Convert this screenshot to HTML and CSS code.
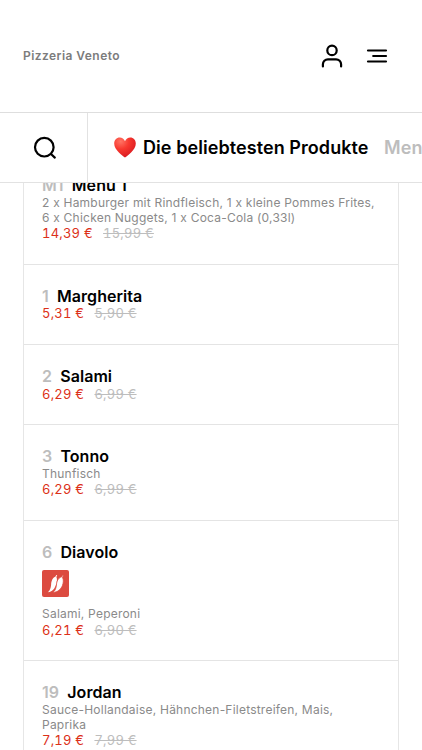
FILE: index.html
```html
<!DOCTYPE html>
<html lang="de">
<head>
<meta charset="utf-8">
<meta name="viewport" content="width=device-width, initial-scale=1">
<title>Pizzeria Veneto</title>
<link rel="stylesheet" href="styles.css">
</head>
<body>
<div class="screen">
  <header class="header">
    <h1 class="brand">Pizzeria Veneto</h1>
    <div class="actions">
      <svg class="icon" width="24" height="26" viewBox="0 0 24 26" aria-label="Konto"><circle cx="12" cy="7.4" r="4.7"/><path d="M2.9 23.4v-2.1a5 5 0 0 1 5-5h8.200a5 5 0 0 1 5 5v2.100"/></svg>
      <svg class="icon" width="22" height="20" viewBox="0 0 22 20" aria-label="Menü"><path d="M2 4.500h18M7.200 10h12.800M2 15.500h18"/></svg>
    </div>
  </header>
  <nav class="tabs">
    <button class="search" aria-label="Suche"><svg class="icon" width="24" height="24" viewBox="0 0 24 24"><circle cx="11.300" cy="11.200" r="9.300"/><path d="M18 18l3.800 3.600"/></svg></button>
    <div class="categories">
      <svg class="heart" width="22" height="21" viewBox="0 0 22 21">
        <defs><radialGradient id="g" cx=".3" cy=".2" r=".85"><stop offset="0" stop-color="#ff7464"/><stop offset=".45" stop-color="#f8382f"/><stop offset="1" stop-color="#d71920"/></radialGradient></defs>
        <path fill="url(#g)" d="M11 20.500C8.500 18.500.2 13 .2 6.400.2 2.900 2.600.4 5.700.4 8 .4 10.200 1.700 11 4.200 11.800 1.700 14 .4 16.300.4c3.100 0 5.500 2.500 5.500 6C21.800 13 13.500 18.500 11 20.500z"/>
      </svg>
      <span class="category active">Die beliebtesten Produkte</span>
      <span class="category">Menüs</span>
    </div>
  </nav>
  <main class="list">
    <article class="item">
      <h2 class="title"><span class="num">M1</span>Menü 1</h2>
      <p class="desc">2 x Hamburger mit Rindfleisch, 1 x kleine Pommes Frites,<br>6 x Chicken Nuggets, 1 x Coca-Cola (0,33l)</p>
      <p class="price">14,39 €<s>15,99 €</s></p>
    </article>
    <article class="item">
      <h2 class="title"><span class="num">1</span>Margherita</h2>
      <p class="price">5,31 €<s>5,90 €</s></p>
    </article>
    <article class="item">
      <h2 class="title"><span class="num">2</span>Salami</h2>
      <p class="price">6,29 €<s>6,99 €</s></p>
    </article>
    <article class="item">
      <h2 class="title"><span class="num">3</span>Tonno</h2>
      <p class="desc">Thunfisch</p>
      <p class="price">6,29 €<s>6,99 €</s></p>
    </article>
    <article class="item">
      <h2 class="title"><span class="num">6</span>Diavolo</h2>
      <svg class="spicy" width="27" height="27" viewBox="0 0 27 27">
        <rect width="27" height="27" rx="2" fill="#dc4b40"/>
        <path fill="#fff" d="M14.300 4.900l.9.400-.8 1.700c.9 1.700.6 4.700-.3 7.500-1.200 4-3.900 7.500-8.300 7.700 2-1.700 3-4.100 3.300-7.300.2-3.300 1-7 4.200-8.100z"/>
        <path fill="#fff" stroke="#dc4b40" stroke-width=".8" d="M20.600 4.900l.9.500-1 2c1.200 2 1 5.200 0 7.900-1.500 4-4.800 7-9.500 7.100 2.300-1.700 3-4.200 3.400-7.400.4-3.800 1.500-7 5.300-8.200z"/>
      </svg>
      <p class="desc">Salami, Peperoni</p>
      <p class="price">6,21 €<s>6,90 €</s></p>
    </article>
    <article class="item">
      <h2 class="title"><span class="num">19</span>Jordan</h2>
      <p class="desc">Sauce-Hollandaise, Hähnchen-Filetstreifen, Mais,<br>Paprika</p>
      <p class="price">7,19 €<s>7,99 €</s></p>
    </article>
  </main>
</div>
</body>
</html>
```
FILE: styles.css
```css
* { box-sizing: border-box; }
body { margin: 0; background: #fff; font-family: Inter, "Liberation Sans", sans-serif; }
h1, h2, p { margin: 0; }
.screen { height: 750px; overflow: hidden; display: flex; flex-direction: column; }
.header { flex: none; height: 112px; padding: 0 34px 0 23px; display: flex; align-items: center; justify-content: space-between; }
.brand { font-size: 12px; font-weight: 600; letter-spacing: .45px; color: #7c7c7c; margin-bottom: 2px; }
.actions { display: flex; align-items: center; gap: 22px; }
.icon { display: block; fill: none; stroke: #000; stroke-width: 2.2; stroke-linecap: round; stroke-linejoin: round; }
.tabs { flex: none; height: 71px; display: flex; border-top: 1px solid #dedede; border-bottom: 1px solid #e2e2e2; }
.search { width: 88px; padding: 0 0 0 33px; border: 0; border-right: 1px solid #e2e2e2; background: none; }
.categories { flex: 1; min-width: 0; overflow: hidden; display: flex; align-items: center; padding-left: 26px; white-space: nowrap; }
.heart { flex: none; margin-right: 7px; }
.category { font-size: 18px; font-weight: 600; letter-spacing: .07px; color: #bdbdbd; margin-right: 15.500px; }
.active { color: #000; }
.list { flex: 1; min-height: 0; overflow: hidden; display: flex; flex-direction: column; margin: 0 23px; border: solid #e6e6e6; border-width: 0 1px; }
.item { flex: none; padding: 22.200px 18px 22.700px; border-bottom: 1px solid #e4e4e4; }
.item:first-child { margin-top: -29px; }
.title { font-size: 16px; line-height: 18.400px; font-weight: 600; letter-spacing: .05px; color: #000; }
.num { color: #bdbdbd; margin-right: 8.200px; }
.desc { font-size: 12px; line-height: 15.200px; letter-spacing: .22px; color: #8a8a8a; white-space: nowrap; }
.price { font-size: 13px; line-height: 16px; letter-spacing: .2px; font-variant-numeric: tabular-nums; color: #dc3018; }
.price s { color: #bdbdbd; margin-left: 10.300px; }
.spicy { display: block; margin: 8.500px 0 9.500px; }
```
